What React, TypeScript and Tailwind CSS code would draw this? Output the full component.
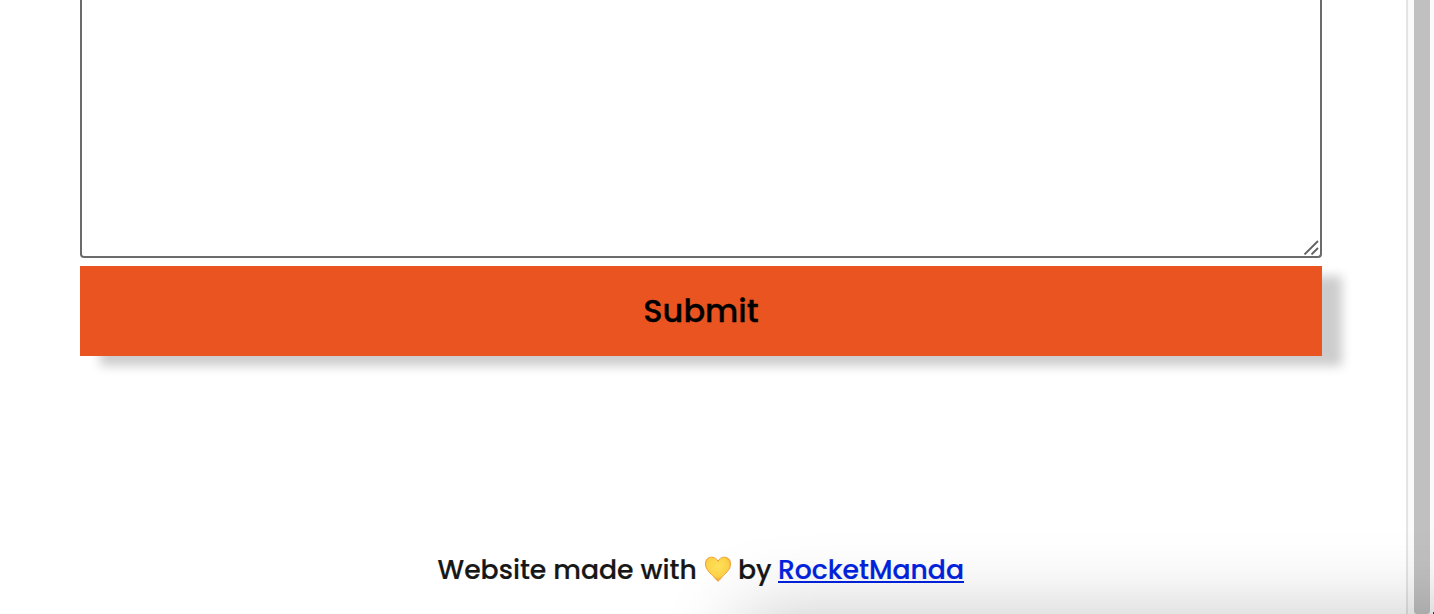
export default function App() {
  return (
    <div className="relative flex h-[614px] w-full overflow-hidden bg-white font-['Poppins','Inter',sans-serif] font-medium">
      <main className="flex flex-1 flex-col pl-20 pr-[84px]">
        <div className="flex h-[258px] items-end justify-end rounded-b-[4px] border-2 border-t-0 border-[#6b6b6b] bg-white">
          <svg width="16" height="16" viewBox="0 0 16 16" className="mb-px mr-px" fill="none" stroke="#606060" strokeWidth="1.8">
            <path d="M1.500 15.500L15 2M8.500 15.500L15 9" />
          </svg>
        </div>
        <button className="mt-2 flex h-[90px] shrink-0 items-center justify-center bg-[#e95420] text-[32px] font-medium text-black shadow-[20px_10px_10px_rgba(0,0,0,0.2)]">
          <span className="[-webkit-text-stroke:0.3px_black]">Submit</span>
        </button>
        <footer className="mt-[193px] flex h-[42px] items-center whitespace-pre pl-[357.500px] text-[26.670px] text-[#171717] [-webkit-text-stroke:0.2px_currentColor]">
          <span className="w-[266px]">Website made with</span>
          <svg width="28" height="28" viewBox="0 0 28 28" className="mb-0.5 mr-[6.500px] shrink-0">
            <defs>
              <radialGradient id="heart" cx="48%" cy="38%" r="62%">
                <stop offset="0" stopColor="#ffe25a" />
                <stop offset="0.7" stopColor="#fdd348" />
                <stop offset="1" stopColor="#f3a02e" />
              </radialGradient>
            </defs>
            <path d="M14 26C12.800 26 11 22.800 7.300 19.300C3.800 16 1.400 13 1.400 8.800C1.400 4.800 4 2.200 7.600 2.200C10.700 2.200 13 4 14 6.300C15 4 17.300 2.200 20.400 2.200C24 2.200 26.600 4.800 26.600 8.800C26.600 13 24.200 16 20.700 19.300C17 22.800 15.200 26 14 26Z" fill="url(#heart)" stroke="#ee9c35" strokeWidth="0.9" />
          </svg>
          <span className="w-10">by</span>
          <a href="#" className="text-[#0023e0] underline decoration-2 underline-offset-2">RocketManda</a>
        </footer>
      </main>
      <aside className="flex w-7 border-l-2 border-[#e4e4e4] bg-[#fafafa] pl-1.5">
        <div className="h-[614px] w-4 rounded-b-[3px] bg-[#c0c0c0]" />
      </aside>
      <div className="pointer-events-none absolute left-[740px] top-[614px] h-[300px] w-[1000px] rounded-[20px] shadow-[0_0_80px_rgba(0,0,0,0.22)]" />
      <div className="absolute bottom-0 right-0 h-0.5 w-px bg-[#333]" />
    </div>
  );
}
